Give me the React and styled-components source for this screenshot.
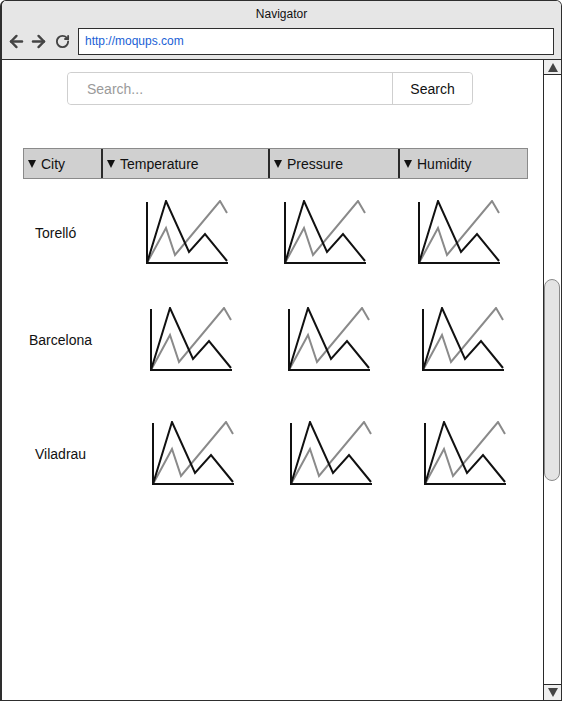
import React from "react";
import styled, { createGlobalStyle } from "styled-components";
import { ArrowLeft, ArrowRight, RotateCw } from "lucide-react";

const GlobalStyle = createGlobalStyle`
  * { box-sizing: border-box; }
  html, body { margin: 0; padding: 0; background: #fff; }
  body { font-family: "Liberation Sans", Arial, sans-serif; }
`;

const COLUMNS = "77px 167px 130px 129px";

const rows = [
  { city: "Torelló", gap: 21, shift: 0, indent: 12 },
  { city: "Barcelona", gap: 41, shift: 4, indent: 6 },
  { city: "Viladrau", gap: 48, shift: 6, indent: 12 },
];

const chartOffsets = [46, 17, 21];

const Chart = () => (
  <svg width="84" height="66" viewBox="0 0 84 66">
    <polyline
      points="1,63 20,28 29,55 74,1 81,13"
      fill="none"
      stroke="#8a8a8a"
      strokeWidth="2"
    />
    <polyline
      points="1,63 20,1 43,52 59,34 81,61"
      fill="none"
      stroke="#111"
      strokeWidth="2"
    />
    <line x1="1" y1="2" x2="1" y2="64" stroke="#111" strokeWidth="2" />
    <line x1="0" y1="63" x2="82" y2="63" stroke="#111" strokeWidth="2" />
  </svg>
);

const App = () => {
  return (
    <>
      <GlobalStyle />
      <Window>
        <TitleBar>
          <Title>Navigator</Title>
          <AddressRow>
            <NavIcons>
              <ArrowLeft size={19} strokeWidth={3} />
              <ArrowRight size={19} strokeWidth={3} />
              <RotateCw size={15} strokeWidth={3} />
            </NavIcons>
            <Address>http://moqups.com</Address>
          </AddressRow>
        </TitleBar>

        <Body>
          <Main>
            <SearchBar>
              <SearchInput placeholder="Search..." />
              <SearchButton>Search</SearchButton>
            </SearchBar>

            <Table>
              <HeaderRow>
                {["City", "Temperature", "Pressure", "Humidity"].map((h, i) => (
                  <HeaderCell key={h} $first={i === 0}>
                    <Caret />
                    {h}
                  </HeaderCell>
                ))}
              </HeaderRow>

              {rows.map((r) => (
                <DataRow key={r.city} $gap={r.gap}>
                  <CityCell $indent={r.indent}>{r.city}</CityCell>
                  {chartOffsets.map((off, i) => (
                    <ChartCell key={i} $offset={off + r.shift}>
                      <Chart />
                    </ChartCell>
                  ))}
                </DataRow>
              ))}
            </Table>
          </Main>

          <ScrollBar>
            <ScrollButton>
              <Arrow />
            </ScrollButton>
            <Track>
              <Thumb />
            </Track>
            <ScrollButton $down>
              <Arrow $down />
            </ScrollButton>
          </ScrollBar>
        </Body>
      </Window>
    </>
  );
};

const Window = styled.div`
  width: 562px;
  height: 701px;
  display: flex;
  flex-direction: column;
  border: 1px solid #2e2e2e;
  border-left-width: 2px;
  border-radius: 6px 6px 0 0;
  overflow: hidden;
  background: #fff;
`;

const TitleBar = styled.div`
  height: 59px;
  background: #e6e6e6;
  border-bottom: 1px solid #2e2e2e;
  display: flex;
  flex-direction: column;
`;

const Title = styled.div`
  height: 27px;
  line-height: 26px;
  text-align: center;
  font-size: 12px;
  color: #111;
`;

const AddressRow = styled.div`
  display: flex;
  align-items: center;
  padding: 0 7px 0 5px;
`;

const NavIcons = styled.div`
  width: 71px;
  display: flex;
  align-items: center;
  gap: 3px;
  color: #444;

  svg:last-child {
    margin-left: 4px;
  }
`;

const Address = styled.div`
  flex: 1;
  height: 27px;
  line-height: 25px;
  padding-left: 6px;
  background: #fff;
  border: 1px solid #2e2e2e;
  font-size: 12px;
  color: #1a5fd6;
`;

const Body = styled.div`
  flex: 1;
  display: flex;
  min-height: 0;
`;

const Main = styled.div`
  flex: 1;
  padding: 12px 0 0 21px;
`;

const SearchBar = styled.div`
  display: flex;
  width: 406px;
  height: 33px;
  margin-left: 44px;
  border: 1px solid #cfcfcf;
  border-radius: 4px;
`;

const SearchInput = styled.input`
  width: 325px;
  border: none;
  border-right: 1px solid #cfcfcf;
  border-radius: 4px 0 0 4px;
  padding: 0 0 0 19px;
  font-family: "Liberation Sans", Arial, sans-serif;
  font-size: 14px;
  outline: none;

  &::placeholder {
    color: #9a9a9a;
  }
`;

const SearchButton = styled.button`
  flex: 1;
  border: none;
  background: #fff;
  border-radius: 0 4px 4px 0;
  font-family: "Liberation Sans", Arial, sans-serif;
  font-size: 14px;
  color: #111;
  padding: 0;
`;

const Table = styled.div`
  margin-top: 43px;
  width: 505px;
`;

const HeaderRow = styled.div`
  display: grid;
  grid-template-columns: ${COLUMNS};
  height: 31px;
  background: #d0d0d0;
  border: 1px solid #8a8a8a;
`;

const HeaderCell = styled.div`
  display: flex;
  align-items: center;
  padding-left: 4px;
  border-left: ${(p) => (p.$first ? "none" : "2px solid #2a2a2a")};
  font-size: 14px;
  color: #111;
`;

const Caret = styled.span`
  width: 0;
  height: 0;
  margin-right: 5px;
  border-left: 4px solid transparent;
  border-right: 4px solid transparent;
  border-top: 8px solid #111;
`;

const DataRow = styled.div`
  display: grid;
  grid-template-columns: ${COLUMNS};
  align-items: center;
  margin-top: ${(p) => p.$gap}px;
`;

const CityCell = styled.div`
  padding-left: ${(p) => p.$indent}px;
  font-size: 14px;
  color: #111;
  white-space: nowrap;
`;

const ChartCell = styled.div`
  display: flex;
  padding-left: ${(p) => p.$offset}px;
`;

const ScrollBar = styled.div`
  width: 18px;
  display: flex;
  flex-direction: column;
  border-left: 1px solid #2a2a2a;
`;

const ScrollButton = styled.div`
  height: ${(p) => (p.$down ? "16px" : "15px")};
  display: flex;
  align-items: center;
  justify-content: center;
  background: #efefef;
  border-${(p) => (p.$down ? "top" : "bottom")}: 1px solid #2a2a2a;
`;

const Arrow = styled.span`
  width: 0;
  height: 0;
  border-left: 5px solid transparent;
  border-right: 5px solid transparent;
  ${(p) =>
    p.$down ? "border-top: 9px solid #444;" : "border-bottom: 9px solid #444;"}
`;

const Track = styled.div`
  flex: 1;
  padding-top: 204px;
`;

const Thumb = styled.div`
  width: 16px;
  height: 202px;
  background: #e4e4e4;
  border: 1px solid #8a8a8a;
  border-radius: 8px;
`;

export default App;
